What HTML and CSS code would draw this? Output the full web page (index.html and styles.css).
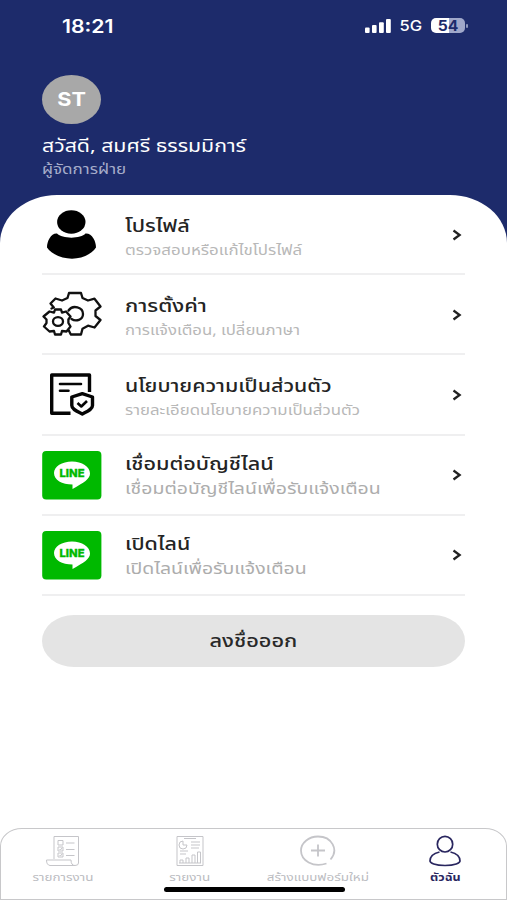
FILE: index.html
```html
<!DOCTYPE html>
<html lang="th">
<head>
<meta charset="utf-8">
<meta name="viewport" content="width=device-width, initial-scale=1">
<title>ตัวฉัน</title>
<link rel="stylesheet" href="styles.css">
</head>
<body>
<div class="screen">
  <header class="top">
    <div class="status">
      <span class="clock">18:21</span>
      <span class="status-right">
        <svg class="signal" width="26" height="14" viewBox="0 0 26 14" fill="#fff"><rect x="0" y="8.5" width="4.6" height="5.5" rx="1"/><rect x="7" y="6" width="4.6" height="8" rx="1"/><rect x="14" y="3.2" width="4.8" height="10.8" rx="1"/><rect x="21" y="0" width="4.8" height="14" rx="1"/></svg>
        <span class="network">5G</span>
        <span class="battery"><span class="level">54</span></span>
      </span>
    </div>
    <div class="avatar"><span>ST</span></div>
    <h1 class="greeting"><span>สวัสดี, สมศรี ธรรมมิการ์</span></h1>
    <p class="role"><span>ผู้จัดการฝ่าย</span></p>
  </header>

  <main class="sheet">
    <ul class="menu">
      <li class="item">
        <svg class="icon" viewBox="0 0 60 50"><ellipse cx="29.3" cy="12" rx="14.2" ry="11.8"/><path d="M15 23.500C20 29 39 29 43.500 23.500C50 23 54 31 54 37.500C50 44 40 48.700 30 48.700S9 44 5 37.500C5 31 9 23 15 23.500Z"/></svg>
        <div class="label"><b><span class="t1">โปรไฟล์</span></b><small><span class="s1">ตรวจสอบหรือแก้ไขโปรไฟล์</span></small></div>
        <svg class="chevron" viewBox="0 0 10 12"><path d="M1.500 1.500L7.600 6L1.500 10.500"/></svg>
      </li>
      <li class="item">
        <svg class="icon line" viewBox="0 0 60 50"><path d="M9.500 18.500L11.800 17.500L8.500 13.500L13.500 8.500L20 10.500L25.500 8L27 3H39L40.500 8L46 10.500L52.500 8.700L58.500 16.500L53.500 20.500V26L58.500 30L52.500 37.500L46 35.700L40.500 38.700L39 44.500H28.800L26.800 40.500"/><path d="M26.500 20.500C31 14 41 17.500 41 24C41 30 34 32 29.500 29"/><path d="M13 19.500H19L20 22.600L24 21.500L28.500 26.500L26.400 29.500V33L28.500 36.500L24.500 41.500L20 41L19 44.500H13L12 41L7.500 41.500L2 36.500L4.500 33V29.500L1.500 26.500L7.500 21.500L12 22.600Z"/><ellipse cx="16" cy="31.500" rx="5" ry="4.300"/></svg>
        <div class="label"><b><span class="t2">การตั้งค่า</span></b><small><span class="s2">การแจ้งเตือน, เปลี่ยนภาษา</span></small></div>
        <svg class="chevron" viewBox="0 0 10 12"><path d="M1.500 1.500L7.600 6L1.500 10.500"/></svg>
      </li>
      <li class="item">
        <svg class="icon doc" viewBox="0 0 60 50"><path d="M28.500 43.200H9.700V5H47.500V22"/><path d="M18 14H39M18 20.700H26.500" stroke-width="2.600" stroke-linecap="round"/><path d="M40.300 23.700L50.500 27V35.500C50.500 39.500 45 41.500 40.300 44C35.500 41.500 29.800 39.500 29.800 35.500V27Z"/><path d="M35.500 33L39.300 36.500L45 31" stroke-width="2.600"/></svg>
        <div class="label"><b><span class="t3">นโยบายความเป็นส่วนตัว</span></b><small><span class="s3">รายละเอียดนโยบายความเป็นส่วนตัว</span></small></div>
        <svg class="chevron" viewBox="0 0 10 12"><path d="M1.500 1.500L7.600 6L1.500 10.500"/></svg>
      </li>
      <li class="item account">
        <svg class="icon" viewBox="0 0 60 50"><rect x=".2" y="1" width="59.200" height="48.500" rx="4" fill="#00b900"/><path d="M30 11.500C40 11.500 48 16.500 48 23.500C48 29 42 32.500 30.500 39V34.500C20 34.500 12 30 12 23C12 16.500 20 11.500 30 11.500Z" fill="#fff"/><text x="17.500" y="27.300" textLength="25" lengthAdjust="spacingAndGlyphs">LINE</text></svg>
        <div class="label"><b><span class="t4">เชื่อมต่อบัญชีไลน์</span></b><small><span class="s4">เชื่อมต่อบัญชีไลน์เพื่อรับแจ้งเตือน</span></small></div>
        <svg class="chevron" viewBox="0 0 10 12"><path d="M1.500 1.500L7.600 6L1.500 10.500"/></svg>
      </li>
      <li class="item account">
        <svg class="icon" viewBox="0 0 60 50"><rect x=".2" y="1" width="59.200" height="48.500" rx="4" fill="#00b900"/><path d="M30 11.500C40 11.500 48 16.500 48 23.500C48 29 42 32.500 30.500 39V34.500C20 34.500 12 30 12 23C12 16.500 20 11.500 30 11.500Z" fill="#fff"/><text x="17.500" y="27.300" textLength="25" lengthAdjust="spacingAndGlyphs">LINE</text></svg>
        <div class="label"><b><span class="t5">เปิดไลน์</span></b><small><span class="s5">เปิดไลน์เพื่อรับแจ้งเตือน</span></small></div>
        <svg class="chevron" viewBox="0 0 10 12"><path d="M1.500 1.500L7.600 6L1.500 10.500"/></svg>
      </li>
    </ul>
    <button class="logout"><span>ลงชื่อออก</span></button>
  </main>

  <nav class="tabs">
    <a class="tab"><svg width="36" height="32" viewBox="0 0 36 32"><path d="M9 24V1.500H33.500V28Q33.500 30.500 30 30.500H5Q1.500 30 1.500 25H26Q26 30.500 30 30.500"/><path d="M13 5.500H18V10H13ZM13 12H18V16H13ZM13 18H18V22H13ZM21 8H29.500M21 14.500H29.500M21 20.500H29.500M14.500 14L15.500 15L17 13M14.500 20L15.500 21L17 19"/></svg><span class="n1">รายการงาน</span></a>
    <a class="tab"><svg width="30" height="32" viewBox="0 0 30 32"><path d="M2 1.500H28V30.500H2Z"/><path d="M9 3.500H21M8 6V10H12A4 4 0 1 1 8 6M16 7H25M16 10H25M16 13H24M5 16H13M5 19H11M4 28H26M5 28V25H8V28M11 28V23H14V28M17 28V20H20V28M22.500 28V17H25.500V28"/></svg><span class="n2">รายงาน</span></a>
    <a class="tab"><svg class="plus" width="36" height="32" viewBox="0 0 36 32"><path d="M30.500 24.500C39 15 32 1.500 18 1.500C8.500 1.500 1 8 1 15.500C1 25.500 13 33 26.500 28.500M18 9.500V21.500M11 15.500H25"/></svg><span class="n3">สร้างแบบฟอร์มใหม่</span></a>
    <a class="tab active"><svg width="32" height="32" viewBox="0 0 32 32"><ellipse cx="16" cy="9.200" rx="7.700" ry="7.800"/><path d="M10.500 17C4 18.500 1 21.500 1 26C1 28 6 30.500 16 30.500S31 28 31 26C31 21.500 28 18.500 21.500 17"/></svg><span class="n4">ตัวฉัน</span></a>
    <i class="home-bar"></i>
  </nav>
</div>
</body>
</html>
```
FILE: styles.css
```css
* { box-sizing: border-box; }
body { margin: 0; font-family: "Noto Sans Thai", "Noto Sans", "Open Sans", sans-serif; }
.screen { width: 507px; height: 900px; display: flex; flex-direction: column; background: #1d2b6b; overflow: hidden; }
.top { height: 195px; padding: 0 39px 0 42px; color: #fff; flex: none; }
.status { height: 51px; padding-left: 20px; display: flex; align-items: center; justify-content: space-between; font-family: Inter, sans-serif; }
.clock { font-size: 18px; font-weight: 600; padding-top: 1px; transform: scaleX(1.18); transform-origin: left; }
.status-right { display: flex; align-items: center; }
.network { font-size: 14.5px; font-weight: 500; margin: 0 10px; line-height: 20px; transform: scaleX(1.14); }
.battery { width: 34px; height: 15px; border-radius: 5px; background: linear-gradient(90deg, #fff 53%, #a0a8ca 53%); display: block; position: relative; margin-right: 3px; }
.battery::after { content: ""; position: absolute; right: -3px; top: 6px; width: 2px; height: 4px; border-radius: 1px; background: #8e98bd; }
.level { display: block; text-align: center; color: #1d2b6b; font-size: 14px; font-weight: 700; line-height: 15px; transform: scaleX(1.12); }
.avatar { margin-top: 24px; width: 59px; height: 49px; border-radius: 50%; background: #a8a8a8; display: flex; align-items: center; justify-content: center; font: 700 19px Inter, sans-serif; }
.avatar span { transform: scaleX(1.14); }
.greeting, .role { margin: 0; white-space: nowrap; font-weight: 400; }
.greeting { margin-top: 10px; height: 26px; font-size: 17px; line-height: 27px; }
.role { height: 20px; font-size: 14px; line-height: 20px; color: #a6adca; }
h1 span, p span, .label span, .tab span, .logout span { display: inline-block; transform-origin: left; white-space: nowrap; }
h1 span { transform: scaleX(1.252); }
p span { transform: scaleX(1.217); }
.sheet { flex: 1; background: #fff; border-radius: 57px 57px 0 0 / 48px 48px 0 0; padding: 0 42px; }
.menu { list-style: none; margin: 0; padding: 0; }
.item { height: 80.25px; border-bottom: 2px solid #efeff0; display: flex; align-items: center; padding-top: 1px; }
.item:first-child { height: 80px; }
.icon { width: 60px; height: 50px; flex: none; }
.line { fill: none; stroke: #111; stroke-width: 2.300; stroke-linejoin: round; stroke-linecap: round; }
.doc { fill: none; stroke: #050505; stroke-width: 3.400; stroke-linejoin: round; }
.icon text { font: 800 10.500px Inter, sans-serif; fill: #00b900; stroke: #00b900; stroke-width: .3; }
.label { margin-left: 23px; flex: 1; height: 50px; padding-top: 5px; }
.account .label { padding-top: 3px; }
.label b, .label small { display: block; }
.label b { font-size: 17px; font-weight: 500; line-height: 25px; height: 25px; color: #242424; }
.label small { font-size: 14px; line-height: 22px; color: #b8b8b8; }
.account .label small { font-size: 15.5px; line-height: 23px; color: #adadad; }
.t1 { transform: scaleX(1.275); }
.t2 { transform: scaleX(1.286); }
.t3 { transform: scaleX(1.255); }
.t4 { transform: scaleX(1.27); }
.t5 { transform: scaleX(1.26); }
.s1 { transform: scaleX(1.208); }
.s2 { transform: scaleX(1.195); }
.s3 { transform: scaleX(1.2); }
.s4 { transform: scaleX(1.257); }
.s5 { transform: scaleX(1.255); }
.chevron { width: 10px; height: 12px; margin-right: 3px; fill: none; stroke: #222; stroke-width: 2.300; }
.logout { display: block; margin: 18.500px 0 0; width: 423px; height: 52px; padding: 2px 0 0; border: 0; border-radius: 32px / 26px; background: #e4e4e4; color: #292929; font: 500 17px "Noto Sans Thai", "Noto Sans", sans-serif; }
.logout span { transform-origin: center; transform: scaleX(1.28); }
.tabs { height: 72px; flex: none; background: #fff; border: 1.500px solid #c8c8ca; border-radius: 22px 22px 0 0 / 18px 18px 0 0; display: grid; grid-template-columns: 124px 129px 127px 128px; position: relative; box-shadow: 0 -30px 0 30px #fff; }
.tab { display: flex; flex-direction: column; align-items: center; padding-top: 6px; color: #bbbcc1; font-size: 11px; line-height: 18px; gap: 2px; }
.tab svg { fill: none; stroke: #c5c5c9; stroke-width: 1; }
.tab .plus { stroke-width: 1.800; }
.tab.active { color: #29265f; font-weight: 700; }
.tab.active svg { stroke: #29265f; stroke-width: 1.700; }
.tab span { transform-origin: center; }
.n1, .n2, .n3 { transform: scaleX(1.22); }
.n4 { transform: scaleX(1.14); }
.home-bar { position: absolute; left: 163px; top: 58px; width: 181px; height: 5px; border-radius: 3px; background: #000; }
```
